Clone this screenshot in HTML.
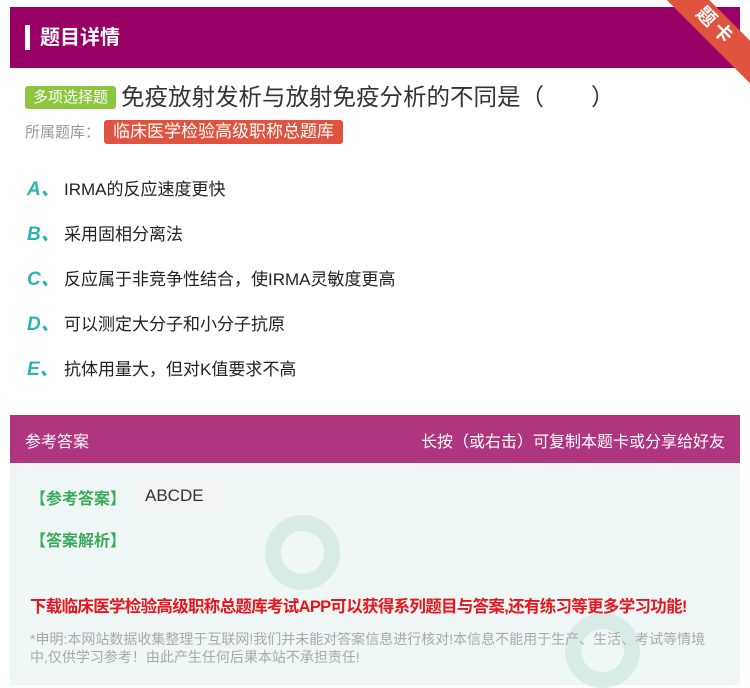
<!DOCTYPE html>
<html><head><meta charset="utf-8"><style>
*{margin:0;padding:0;box-sizing:border-box}
body{width:750px;height:685px;background:#fff;font-family:"Liberation Sans","Noto Sans CJK SC",sans-serif;position:relative;overflow:hidden;color:#333}
.hd{position:absolute;left:10px;top:7px;width:730px;height:61px;background:#990066}
.hd .bar{position:absolute;left:15px;top:18px;width:5px;height:25px;background:#fff}
.hd .t{position:absolute;left:30px;top:14px;color:#fff;font-size:20px;font-weight:bold}
.ribbon{position:absolute;right:-30px;top:12px;width:130px;height:30px;background:#e0533f;transform:rotate(45deg);color:#fff;font-size:19px;font-weight:bold;text-align:center;line-height:30px;letter-spacing:4px}
.q{position:absolute;left:25px;top:78px;font-size:23.5px;color:#333;white-space:nowrap}
.tag{display:inline-block;background:#8cc63f;color:#fff;font-size:15px;padding:0 8px;height:23px;line-height:23px;border-radius:3px;vertical-align:3px;margin-right:5px}
.lib{position:absolute;left:25px;top:120px;font-size:15px;color:#999}
.lib span{display:inline-block;background:#e0533f;color:#fff;padding:0 9px;height:24px;line-height:24px;border-radius:3px;font-size:17px;margin-left:4px}
.opt{position:absolute;left:27px;font-size:17px;color:#222}
.opt b{color:#2bb5b0;font-style:italic;font-size:19px;display:inline-block;width:37px}
.ah{position:absolute;left:10px;top:415px;width:730px;height:48px;background:#b0357f;color:#fff;font-size:16px}
.ah .l{position:absolute;left:15px;top:13px}
.ah .r{position:absolute;right:15px;top:13px}
.ab{position:absolute;left:10px;top:463px;width:730px;height:222px;background:#eef7f5}
.g{position:absolute;color:#3aaa5a;font-size:16px;font-weight:bold}
.red{position:absolute;left:30px;top:593px;color:#e8141e;font-size:16.5px;font-weight:bold;white-space:nowrap;letter-spacing:-0.7px}
.note{position:absolute;left:30px;top:630px;width:690px;color:#aaa;font-size:14px;line-height:18px}
.swirl{position:absolute;border-radius:50%;border:16px solid #cfe6e0;opacity:.7}
</style></head><body>
<div class="hd"><div class="bar"></div><div class="t">题目详情</div></div>
<div class="ribbon">题卡</div>
<div class="q"><span class="tag">多项选择题</span>免疫放射发析与放射免疫分析的不同是（　　）</div>
<div class="lib">所属题库：<span>临床医学检验高级职称总题库</span></div>
<div class="opt" style="top:174px"><b>A、</b>IRMA的反应速度更快</div>
<div class="opt" style="top:219px"><b>B、</b>采用固相分离法</div>
<div class="opt" style="top:264px"><b>C、</b>反应属于非竞争性结合，使IRMA灵敏度更高</div>
<div class="opt" style="top:309px"><b>D、</b>可以测定大分子和小分子抗原</div>
<div class="opt" style="top:354px"><b>E、</b>抗体用量大，但对K值要求不高</div>
<div class="ah"><span class="l">参考答案</span><span class="r">长按（或右击）可复制本题卡或分享给好友</span></div>
<div class="ab">
<div class="swirl" style="left:255px;top:52px;width:75px;height:75px"></div>
<div class="swirl" style="left:555px;top:150px;width:75px;height:75px"></div>
</div>
<div class="g" style="left:30px;top:485px">【参考答案】</div>
<div style="position:absolute;left:133px;top:483px;width:90px;height:30px;background:#f4f4f4;font-size:17px;color:#333;padding:3px 0 0 12px">ABCDE</div>
<div class="g" style="left:30px;top:527px">【答案解析】</div>
<div class="red">下载临床医学检验高级职称总题库考试APP可以获得系列题目与答案,还有练习等更多学习功能!</div>
<div class="note">*申明:本网站数据收集整理于互联网!我们并未能对答案信息进行核对!本信息不能用于生产、生活、考试等情境中,仅供学习参考！由此产生任何后果本站不承担责任!</div>
</body></html>
